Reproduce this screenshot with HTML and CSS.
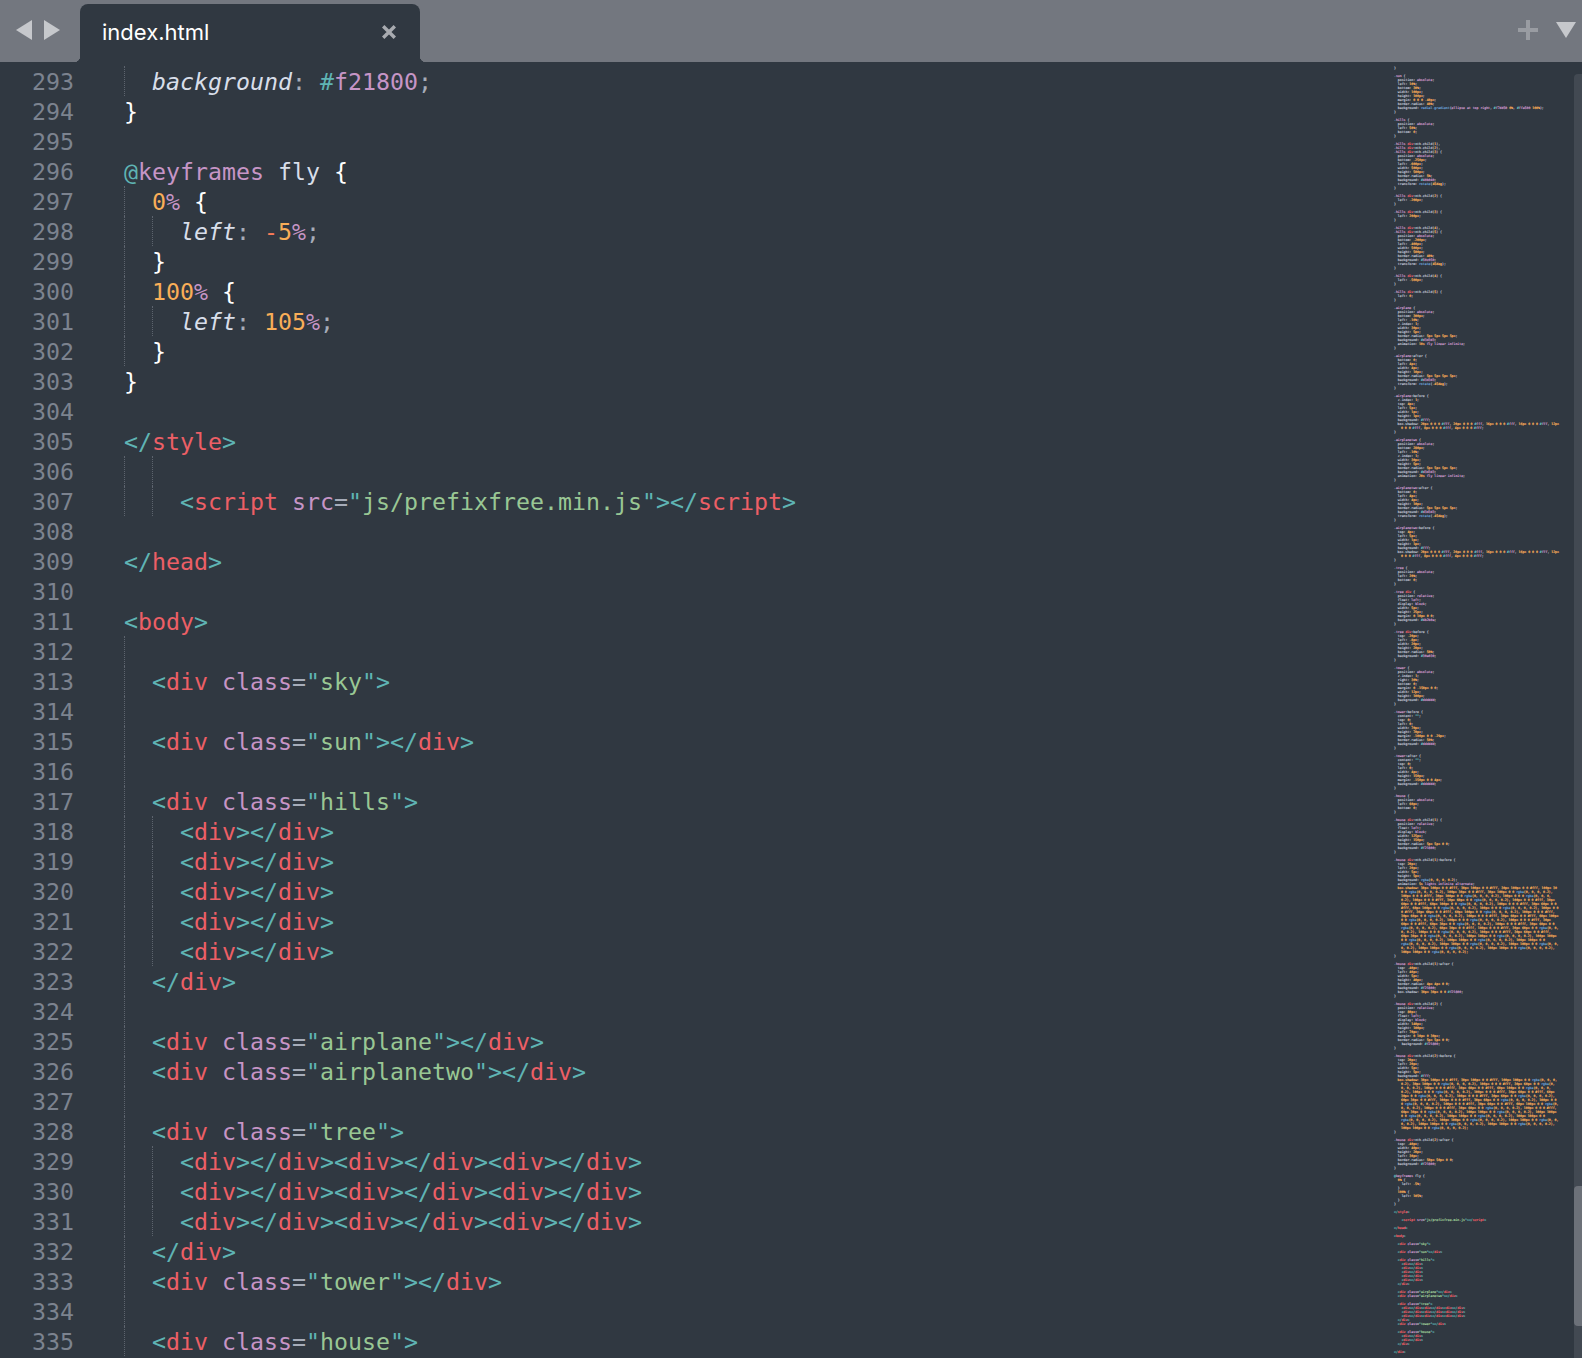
FILE: index.html
```html
<!DOCTYPE html>
<html lang="en">
<head>
  <meta charset="UTF-8" />
  <title>index.html</title>
  <link rel="stylesheet" href="styles.css">
</head>
<body>
  <div class="tabbar">
    <div class="nav">
      <svg width="16" height="20" viewBox="0 0 16 20"><path d="M16 0V20L0 10Z" /></svg>
      <svg width="16" height="20" viewBox="0 0 16 20"><path d="M0 0V20L16 10Z" /></svg>
    </div>
    <div class="tab">
      <span class="tab-name">index.html</span>
      <svg class="tab-close" width="14" height="14" viewBox="0 0 14 14"><path d="M1.2 1.2L12.8 12.8M12.8 1.2L1.2 12.8" /></svg>
    </div>
    <div class="tools">
      <svg class="plus" width="20" height="20" viewBox="0 0 20 20"><path d="M8 0H12V8H20V12H12V20H8V12H0V8H8Z" /></svg>
      <svg class="down" width="20" height="16" viewBox="0 0 20 16"><path d="M0 0H20L10 16Z" /></svg>
    </div>
  </div>

  <div class="editor">
    <div class="gutter">
      <div>293</div><div>294</div><div>295</div><div>296</div><div>297</div><div>298</div><div>299</div>
      <div>300</div><div>301</div><div>302</div><div>303</div><div>304</div><div>305</div><div>306</div>
      <div>307</div><div>308</div><div>309</div><div>310</div><div>311</div><div>312</div><div>313</div>
      <div>314</div><div>315</div><div>316</div><div>317</div><div>318</div><div>319</div><div>320</div>
      <div>321</div><div>322</div><div>323</div><div>324</div><div>325</div><div>326</div><div>327</div>
      <div>328</div><div>329</div><div>330</div><div>331</div><div>332</div><div>333</div><div>334</div>
      <div>335</div>
    </div>

    <div class="code">
      <div class="line"><span class="g"></span><span class="prop">background</span><span class="m">:</span> <span class="c">#</span><span class="a">f21800</span><span class="m">;</span></div>
      <div class="line"><span class="w">}</span></div>
      <div class="line"></div>
      <div class="line"><span class="c">@</span><span class="a">keyframes</span> <span class="n">fly</span> <span class="w">{</span></div>
      <div class="line"><span class="g"></span><span class="o">0</span><span class="a">%</span> <span class="w">{</span></div>
      <div class="line"><span class="g"></span><span class="g"></span><span class="prop">left</span><span class="m">:</span> <span class="minus">-</span><span class="o">5</span><span class="a">%</span><span class="m">;</span></div>
      <div class="line"><span class="g"></span><span class="w">}</span></div>
      <div class="line"><span class="g"></span><span class="o">100</span><span class="a">%</span> <span class="w">{</span></div>
      <div class="line"><span class="g"></span><span class="g"></span><span class="prop">left</span><span class="m">:</span> <span class="o">105</span><span class="a">%</span><span class="m">;</span></div>
      <div class="line"><span class="g"></span><span class="w">}</span></div>
      <div class="line"><span class="w">}</span></div>
      <div class="line"></div>
      <div class="line"><span class="c">&lt;/</span><span class="t">style</span><span class="c">&gt;</span></div>
      <div class="line"><span class="g"></span><span class="g"></span></div>
      <div class="line"><span class="g"></span><span class="g"></span><span class="c">&lt;</span><span class="t">script</span> <span class="a">src</span><span class="m">=</span><span class="c">"</span><span class="s">js/prefixfree.min.js</span><span class="c">"&gt;&lt;/</span><span class="t">script</span><span class="c">&gt;</span></div>
      <div class="line"></div>
      <div class="line"><span class="c">&lt;/</span><span class="t">head</span><span class="c">&gt;</span></div>
      <div class="line"></div>
      <div class="line"><span class="c">&lt;</span><span class="t">body</span><span class="c">&gt;</span></div>
      <div class="line"><span class="g"></span></div>
      <div class="line"><span class="g"></span><span class="c">&lt;</span><span class="t">div</span> <span class="a">class</span><span class="m">=</span><span class="c">"</span><span class="s">sky</span><span class="c">"&gt;</span></div>
      <div class="line"><span class="g"></span></div>
      <div class="line"><span class="g"></span><span class="c">&lt;</span><span class="t">div</span> <span class="a">class</span><span class="m">=</span><span class="c">"</span><span class="s">sun</span><span class="c">"&gt;&lt;/</span><span class="t">div</span><span class="c">&gt;</span></div>
      <div class="line"><span class="g"></span></div>
      <div class="line"><span class="g"></span><span class="c">&lt;</span><span class="t">div</span> <span class="a">class</span><span class="m">=</span><span class="c">"</span><span class="s">hills</span><span class="c">"&gt;</span></div>
      <div class="line"><span class="g"></span><span class="g"></span><span class="c">&lt;</span><span class="t">div</span><span class="c">&gt;&lt;/</span><span class="t">div</span><span class="c">&gt;</span></div>
      <div class="line"><span class="g"></span><span class="g"></span><span class="c">&lt;</span><span class="t">div</span><span class="c">&gt;&lt;/</span><span class="t">div</span><span class="c">&gt;</span></div>
      <div class="line"><span class="g"></span><span class="g"></span><span class="c">&lt;</span><span class="t">div</span><span class="c">&gt;&lt;/</span><span class="t">div</span><span class="c">&gt;</span></div>
      <div class="line"><span class="g"></span><span class="g"></span><span class="c">&lt;</span><span class="t">div</span><span class="c">&gt;&lt;/</span><span class="t">div</span><span class="c">&gt;</span></div>
      <div class="line"><span class="g"></span><span class="g"></span><span class="c">&lt;</span><span class="t">div</span><span class="c">&gt;&lt;/</span><span class="t">div</span><span class="c">&gt;</span></div>
      <div class="line"><span class="g"></span><span class="c">&lt;/</span><span class="t">div</span><span class="c">&gt;</span></div>
      <div class="line"><span class="g"></span></div>
      <div class="line"><span class="g"></span><span class="c">&lt;</span><span class="t">div</span> <span class="a">class</span><span class="m">=</span><span class="c">"</span><span class="s">airplane</span><span class="c">"&gt;&lt;/</span><span class="t">div</span><span class="c">&gt;</span></div>
      <div class="line"><span class="g"></span><span class="c">&lt;</span><span class="t">div</span> <span class="a">class</span><span class="m">=</span><span class="c">"</span><span class="s">airplanetwo</span><span class="c">"&gt;&lt;/</span><span class="t">div</span><span class="c">&gt;</span></div>
      <div class="line"><span class="g"></span></div>
      <div class="line"><span class="g"></span><span class="c">&lt;</span><span class="t">div</span> <span class="a">class</span><span class="m">=</span><span class="c">"</span><span class="s">tree</span><span class="c">"&gt;</span></div>
      <div class="line"><span class="g"></span><span class="g"></span><span class="c">&lt;</span><span class="t">div</span><span class="c">&gt;&lt;/</span><span class="t">div</span><span class="c">&gt;&lt;</span><span class="t">div</span><span class="c">&gt;&lt;/</span><span class="t">div</span><span class="c">&gt;&lt;</span><span class="t">div</span><span class="c">&gt;&lt;/</span><span class="t">div</span><span class="c">&gt;</span></div>
      <div class="line"><span class="g"></span><span class="g"></span><span class="c">&lt;</span><span class="t">div</span><span class="c">&gt;&lt;/</span><span class="t">div</span><span class="c">&gt;&lt;</span><span class="t">div</span><span class="c">&gt;&lt;/</span><span class="t">div</span><span class="c">&gt;&lt;</span><span class="t">div</span><span class="c">&gt;&lt;/</span><span class="t">div</span><span class="c">&gt;</span></div>
      <div class="line"><span class="g"></span><span class="g"></span><span class="c">&lt;</span><span class="t">div</span><span class="c">&gt;&lt;/</span><span class="t">div</span><span class="c">&gt;&lt;</span><span class="t">div</span><span class="c">&gt;&lt;/</span><span class="t">div</span><span class="c">&gt;&lt;</span><span class="t">div</span><span class="c">&gt;&lt;/</span><span class="t">div</span><span class="c">&gt;</span></div>
      <div class="line"><span class="g"></span><span class="c">&lt;/</span><span class="t">div</span><span class="c">&gt;</span></div>
      <div class="line"><span class="g"></span><span class="c">&lt;</span><span class="t">div</span> <span class="a">class</span><span class="m">=</span><span class="c">"</span><span class="s">tower</span><span class="c">"&gt;&lt;/</span><span class="t">div</span><span class="c">&gt;</span></div>
      <div class="line"><span class="g"></span></div>
      <div class="line"><span class="g"></span><span class="c">&lt;</span><span class="t">div</span> <span class="a">class</span><span class="m">=</span><span class="c">"</span><span class="s">house</span><span class="c">"&gt;</span></div>
    </div>

    <pre class="minimap">}

<s>.</s><i>sun</i> {
  position: <i>absolute</i>;
  left: <b>10%</b>;
  bottom: <b>30%</b>;
  width: <b>100px</b>;
  height: <b>100px</b>;
  margin: <b>0 0 0 -40px</b>;
  border-radius: <b>40%</b>;
  background: <u>radial-gradient</u>(<i>ellipse at top right</i>, <s>#</s><i>f7dd50</i> <b>0%</b>, <s>#</s><i>ffa500</i> <b>100%</b>);
}

<s>.</s><i>hills</i> {
  position: <i>absolute</i>;
  left: <b>50%</b>;
  bottom: <b>0</b>;
}

<s>.</s><i>hills</i> <em>div</em>:nth-child(<b>1</b>),
<s>.</s><i>hills</i> <em>div</em>:nth-child(<b>2</b>),
<s>.</s><i>hills</i> <em>div</em>:nth-child(<b>3</b>) {
  position: <i>absolute</i>;
  bottom: <b>-250px</b>;
  left: <b>-600px</b>;
  width: <b>500px</b>;
  height: <b>500px</b>;
  border-radius: <b>5%</b>;
  background: <s>#</s><i>40b040</i>;
  transform: <u>rotate</u>(<b>45deg</b>);
}

<s>.</s><i>hills</i> <em>div</em>:nth-child(<b>2</b>) {
  left: <b>-200px</b>;
}

<s>.</s><i>hills</i> <em>div</em>:nth-child(<b>3</b>) {
  left: <b>200px</b>;
}

<s>.</s><i>hills</i> <em>div</em>:nth-child(<b>4</b>),
<s>.</s><i>hills</i> <em>div</em>:nth-child(<b>5</b>) {
  position: <i>absolute</i>;
  bottom: <b>-200px</b>;
  left: <b>-400px</b>;
  width: <b>500px</b>;
  height: <b>500px</b>;
  border-radius: <b>40%</b>;
  background: <s>#</s><i>50c050</i>;
  transform: <u>rotate</u>(<b>45deg</b>);
}

<s>.</s><i>hills</i> <em>div</em>:nth-child(<b>4</b>) {
  left: <b>-500px</b>;
}

<s>.</s><i>hills</i> <em>div</em>:nth-child(<b>5</b>) {
  left: <b>0</b>;
}

<s>.</s><i>airplane</i> {
  position: <i>absolute</i>;
  bottom: <b>300px</b>;
  left: <b>-10%</b>;
  z-index: <b>1</b>;
  width: <b>30px</b>;
  height: <b>5px</b>;
  border-radius: <b>5px 5px 5px 5px</b>;
  background: <s>#</s><i>d3d3d3</i>;
  animation: <b>10s</b> <i>fly linear infinite</i>;
}

<s>.</s><i>airplane</i>:after {
  bottom: <b>0</b>;
  left: <b>4px</b>;
  width: <b>4px</b>;
  height: <b>10px</b>;
  border-radius: <b>5px 5px 5px 5px</b>;
  background: <s>#</s><i>d3d3d3</i>;
  transform: <u>rotate</u>(<b>-45deg</b>);
}

<s>.</s><i>airplane</i>:before {
  z-index: <b>1</b>;
  top: <b>4px</b>;
  left: <b>5px</b>;
  width: <b>1px</b>;
  height: <b>1px</b>;
  background: <s>#</s><i>fff</i>;
<span class="wrap">box-shadow: <b>20px 0 0 0</b> <s>#</s><i>fff</i>, <b>20px 0 0 0</b> <s>#</s><i>fff</i>, <b>16px 0 0 0</b> <s>#</s><i>fff</i>, <b>16px 0 0 0</b> <s>#</s><i>fff</i>, <b>12px 0 0 0</b> <s>#</s><i>fff</i>, <b>8px 0 0 0</b> <s>#</s><i>fff</i>, <b>4px 0 0 0</b> <s>#</s><i>fff</i>;</span>}

<s>.</s><i>airplanetwo</i> {
  position: <i>absolute</i>;
  bottom: <b>280px</b>;
  left: <b>-10%</b>;
  z-index: <b>1</b>;
  width: <b>30px</b>;
  height: <b>5px</b>;
  border-radius: <b>5px 5px 5px 5px</b>;
  background: <s>#</s><i>d3d3d3</i>;
  animation: <b>20s</b> <i>fly linear infinite</i>;
}

<s>.</s><i>airplanetwo</i>:after {
  bottom: <b>0</b>;
  left: <b>4px</b>;
  width: <b>4px</b>;
  height: <b>10px</b>;
  border-radius: <b>5px 5px 5px 5px</b>;
  background: <s>#</s><i>d3d3d3</i>;
  transform: <u>rotate</u>(<b>-45deg</b>);
}

<s>.</s><i>airplanetwo</i>:before {
  top: <b>4px</b>;
  left: <b>5px</b>;
  width: <b>1px</b>;
  height: <b>1px</b>;
  background: <s>#</s><i>fff</i>;
<span class="wrap">box-shadow: <b>20px 0 0 0</b> <s>#</s><i>fff</i>, <b>20px 0 0 0</b> <s>#</s><i>fff</i>, <b>16px 0 0 0</b> <s>#</s><i>fff</i>, <b>16px 0 0 0</b> <s>#</s><i>fff</i>, <b>12px 0 0 0</b> <s>#</s><i>fff</i>, <b>8px 0 0 0</b> <s>#</s><i>fff</i>, <b>4px 0 0 0</b> <s>#</s><i>fff</i>;</span>}

<s>.</s><i>tree</i> {
  position: <i>absolute</i>;
  left: <b>20%</b>;
  bottom: <b>0</b>;
}

<s>.</s><i>tree</i> <em>div</em> {
  position: <i>relative</i>;
  float: <i>left</i>;
  display: <i>block</i>;
  width: <b>5px</b>;
  height: <b>25px</b>;
  margin: <b>0 10px 0 0</b>;
  background: <s>#</s><i>4b2b0a</i>;
}

<s>.</s><i>tree</i> <em>div</em>:before {
  top: <b>-20px</b>;
  left: <b>-8px</b>;
  width: <b>20px</b>;
  height: <b>20px</b>;
  border-radius: <b>50%</b>;
  background: <s>#</s><i>30a030</i>;
}

<s>.</s><i>tower</i> {
  position: <i>absolute</i>;
  z-index: <b>1</b>;
  right: <b>30%</b>;
  bottom: <b>0</b>;
  margin: <b>0 -150px 0 0</b>;
  width: <b>12px</b>;
  height: <b>100px</b>;
  background: <s>#</s><i>dddddd</i>;
}

<s>.</s><i>tower</i>:before {
  content: <s>""</s>;
  top: <b>0</b>;
  left: <b>0</b>;
  width: <b>70px</b>;
  height: <b>70px</b>;
  margin: <b>-100px 0 0 -29px</b>;
  border-radius: <b>50%</b>;
  background: <s>#</s><i>dddddd</i>;
}

<s>.</s><i>tower</i>:after {
  content: <s>""</s>;
  top: <b>0</b>;
  left: <b>0</b>;
  width: <b>4px</b>;
  height: <b>150px</b>;
  margin: <b>-150px 0 0 4px</b>;
  background: <s>#</s><i>dddddd</i>;
}

<s>.</s><i>house</i> {
  position: <i>absolute</i>;
  left: <b>60px</b>;
  bottom: <b>0</b>;
}

<s>.</s><i>house</i> <em>div</em>:nth-child(<b>1</b>) {
  position: <i>relative</i>;
  float: <i>left</i>;
  display: <i>block</i>;
  width: <b>125px</b>;
  height: <b>150px</b>;
  border-radius: <b>5px 5px 0 0</b>;
  background: <s>#</s><i>f21800</i>;
}

<s>.</s><i>house</i> <em>div</em>:nth-child(<b>1</b>):before {
  top: <b>20px</b>;
  left: <b>20px</b>;
  width: <b>5px</b>;
  height: <b>5px</b>;
  background: <u>rgba</u>(<b>0, 0, 0, 0.2</b>);
  animation: <b>5s</b> <i>lights infinite alternate</i>;
<span class="wrap shadow">box-shadow: 30px 100px 0 0 #fff, 30px 100px 0 0 #fff, 30px 100px 0 0 #fff, 100px 30 0 0 <u>rgba</u>(0, 0, 0, 0.2), 100px 30px 0 0 #fff, 30px 100px 0 0 <u>rgba</u>(0, 0, 0, 0.2), 100px 0 0 0 #fff, 30px 100px 0 0 <u>rgba</u>(0, 0, 0, 0.2), 100px 0 0 0 <u>rgba</u>(0, 0, 0, 0.2), 100px 0 0 0 #fff, 30px 60px 0 0 <u>rgba</u>(0, 0, 0, 0.2), 100px 0 0 0 #fff, 30px 60px 0 0 #fff, 60px 100px 0 0 <u>rgba</u>(0, 0, 0, 0.2), 100px 0 0 0 #fff, 30px 60px 0 0 #fff, 60px 100px 0 0 <u>rgba</u>(0, 0, 0, 0.2), 100px 0 0 0 <u>rgba</u>(0, 0, 0, 0.2), 100px 0 0 0 #fff, 30px 60px 0 0 #fff, 60px 100px 0 0 <u>rgba</u>(0, 0, 0, 0.2), 100px 0 0 0 #fff, 30px 60px 0 0 <u>rgba</u>(0, 0, 0, 0.2), 100px 0 0 0 #fff, 30px 60px 0 0 #fff, 60px 100px 0 0 <u>rgba</u>(0, 0, 0, 0.2), 100px 0 0 0 <u>rgba</u>(0, 0, 0, 0.2), 100px 0 0 0 #fff, 30px 60px 0 0 #fff, 60px 30px 0 0 <u>rgba</u>(0, 0, 0, 0.2), 100px 0 0 0 #fff, 30px 60px 0 0 <u>rgba</u>(0, 0, 0, 0.2), 60px 30px 0 0 #fff, 100px 0 0 0 #fff, 30px 60px 0 0 <u>rgba</u>(0, 0, 0, 0.2), 100px 0 0 0 <u>rgba</u>(0, 0, 0, 0.2), 100px 0 0 0 #fff, 30px 60px 0 0 #fff, 60px 30px 0 0 <u>rgba</u>(0, 0, 0, 0.2), 100px 100px 0 0 <u>rgba</u>(0, 0, 0, 0.2), 100px 100px 0 0 <u>rgba</u>(0, 0, 0, 0.2), 100px 100px 0 0 <u>rgba</u>(0, 0, 0, 0.2), 100px 100px 0 0 <u>rgba</u>(0, 0, 0, 0.2), 100px 100px 0 0 <u>rgba</u>(0, 0, 0, 0.2), 100px 100px 0 0 <u>rgba</u>(0, 0, 0, 0.2), 100px 100px 0 0 <u>rgba</u>(0, 0, 0, 0.2), 100px 100px 0 0 <u>rgba</u>(0, 0, 0, 0.2), 100px 100px 0 0 <u>rgba</u>(0, 0, 0, 0.2);</span>}

<s>.</s><i>house</i> <em>div</em>:nth-child(<b>1</b>):after {
  top: <b>-40px</b>;
  left: <b>40px</b>;
  width: <b>5px</b>;
  height: <b>40px</b>;
  border-radius: <b>4px 4px 0 0</b>;
  background: <s>#</s><i>f21800</i>;
  box-shadow: <b>30px 30px 0 0</b> <s>#</s><i>f21800</i>;
}

<s>.</s><i>house</i> <em>div</em>:nth-child(<b>2</b>) {
  position: <i>relative</i>;
  top: <b>80px</b>;
  float: <i>left</i>;
  display: <i>block</i>;
  width: <b>140px</b>;
  height: <b>100px</b>;
  left: <b>70px</b>;
  margin: <b>0 10px 0 30px</b>;
  border-radius: <b>5px 5px 0 0</b>;
    background: <s>#</s><i>f21800</i>;
}

<s>.</s><i>house</i> <em>div</em>:nth-child(<b>2</b>):before {
  top: <b>20px</b>;
  left: <b>20px</b>;
  width: <b>5px</b>;
  height: <b>5px</b>;
  background: <s>#</s><i>fff</i>;
<span class="wrap shadow">box-shadow: 30px 100px 0 0 #fff, 30px 100px 0 0 #fff, 100px 100px 0 0 <u>rgba</u>(0, 0, 0, 0.2), 30px 100px 0 0 <u>rgba</u>(0, 0, 0, 0.2), 100px 0 0 0 #fff, 30px 60px 0 0 <u>rgba</u>(0, 0, 0, 0.2), 100px 0 0 0 #fff, 30px 60px 0 0 #fff, 60px 100px 0 0 <u>rgba</u>(0, 0, 0, 0.2), 100px 0 0 0 <u>rgba</u>(0, 0, 0, 0.2), 100px 0 0 0 #fff, 30px 60px 0 0 #fff, 60px 30px 0 0 <u>rgba</u>(0, 0, 0, 0.2), 100px 0 0 0 #fff, 30px 60px 0 0 <u>rgba</u>(0, 0, 0, 0.2), 60px 30px 0 0 #fff, 100px 0 0 0 #fff, 30px 60px 0 0 <u>rgba</u>(0, 0, 0, 0.2), 100px 0 0 0 <u>rgba</u>(0, 0, 0, 0.2), 100px 0 0 0 #fff, 30px 60px 0 0 #fff, 60px 100px 0 0 <u>rgba</u>(0, 0, 0, 0.2), 100px 0 0 0 #fff, 30px 60px 0 0 <u>rgba</u>(0, 0, 0, 0.2), 100px 0 0 0 #fff, 60px 30px 0 0 <u>rgba</u>(0, 0, 0, 0.2), 100px 100px 0 0 <u>rgba</u>(0, 0, 0, 0.2), 100px 100px 0 0 <u>rgba</u>(0, 0, 0, 0.2), 100px 100px 0 0 <u>rgba</u>(0, 0, 0, 0.2), 100px 100px 0 0 <u>rgba</u>(0, 0, 0, 0.2), 100px 100px 0 0 <u>rgba</u>(0, 0, 0, 0.2), 100px 100px 0 0 <u>rgba</u>(0, 0, 0, 0.2), 100px 100px 0 0 <u>rgba</u>(0, 0, 0, 0.2), 100px 100px 0 0 <u>rgba</u>(0, 0, 0, 0.2), 100px 100px 0 0 <u>rgba</u>(0, 0, 0, 0.2);</span>}

<s>.</s><i>house</i> <em>div</em>:nth-child(<b>2</b>):after {
  top: <b>-40px</b>;
  width: <b>40px</b>;
  height: <b>20px</b>;
  left: <b>30px</b>;
  border-radius: <b>50px 50px 0 0</b>;
  background: <s>#</s><i>f21800</i>;
}

<s>@</s><i>keyframes</i> fly {
  <b>0%</b> {
    left: <b>-5%</b>;
  }
  <b>100%</b> {
    left: <b>105%</b>;
  }
}

<s>&lt;/</s><em>style</em><s>&gt;</s>

    <s>&lt;</s><em>script</em> <i>src</i>=<s>"</s><q>js/prefixfree.min.js</q><s>"&gt;&lt;/</s><em>script</em><s>&gt;</s>

<s>&lt;/</s><em>head</em><s>&gt;</s>

<s>&lt;</s><em>body</em><s>&gt;</s>

  <s>&lt;</s><em>div</em> <i>class</i>=<s>"</s><q>sky</q><s>"&gt;</s>

  <s>&lt;</s><em>div</em> <i>class</i>=<s>"</s><q>sun</q><s>"&gt;&lt;/</s><em>div</em><s>&gt;</s>

  <s>&lt;</s><em>div</em> <i>class</i>=<s>"</s><q>hills</q><s>"&gt;</s>
    <s>&lt;</s><em>div</em><s>&gt;&lt;/</s><em>div</em><s>&gt;</s>
    <s>&lt;</s><em>div</em><s>&gt;&lt;/</s><em>div</em><s>&gt;</s>
    <s>&lt;</s><em>div</em><s>&gt;&lt;/</s><em>div</em><s>&gt;</s>
    <s>&lt;</s><em>div</em><s>&gt;&lt;/</s><em>div</em><s>&gt;</s>
    <s>&lt;</s><em>div</em><s>&gt;&lt;/</s><em>div</em><s>&gt;</s>
  <s>&lt;/</s><em>div</em><s>&gt;</s>

  <s>&lt;</s><em>div</em> <i>class</i>=<s>"</s><q>airplane</q><s>"&gt;&lt;/</s><em>div</em><s>&gt;</s>
  <s>&lt;</s><em>div</em> <i>class</i>=<s>"</s><q>airplanetwo</q><s>"&gt;&lt;/</s><em>div</em><s>&gt;</s>

  <s>&lt;</s><em>div</em> <i>class</i>=<s>"</s><q>tree</q><s>"&gt;</s>
    <s>&lt;</s><em>div</em><s>&gt;&lt;/</s><em>div</em><s>&gt;&lt;</s><em>div</em><s>&gt;&lt;/</s><em>div</em><s>&gt;&lt;</s><em>div</em><s>&gt;&lt;/</s><em>div</em><s>&gt;</s>
    <s>&lt;</s><em>div</em><s>&gt;&lt;/</s><em>div</em><s>&gt;&lt;</s><em>div</em><s>&gt;&lt;/</s><em>div</em><s>&gt;&lt;</s><em>div</em><s>&gt;&lt;/</s><em>div</em><s>&gt;</s>
    <s>&lt;</s><em>div</em><s>&gt;&lt;/</s><em>div</em><s>&gt;&lt;</s><em>div</em><s>&gt;&lt;/</s><em>div</em><s>&gt;&lt;</s><em>div</em><s>&gt;&lt;/</s><em>div</em><s>&gt;</s>
  <s>&lt;/</s><em>div</em><s>&gt;</s>
  <s>&lt;</s><em>div</em> <i>class</i>=<s>"</s><q>tower</q><s>"&gt;&lt;/</s><em>div</em><s>&gt;</s>

  <s>&lt;</s><em>div</em> <i>class</i>=<s>"</s><q>house</q><s>"&gt;</s>
    <s>&lt;</s><em>div</em><s>&gt;&lt;/</s><em>div</em><s>&gt;</s>
    <s>&lt;</s><em>div</em><s>&gt;&lt;/</s><em>div</em><s>&gt;</s>
  <s>&lt;/</s><em>div</em><s>&gt;</s>

<s>&lt;/</s><em>div</em><s>&gt;</s></pre>

    <div class="scrollbar">
      <div class="thumb"></div>
    </div>
  </div>
</body>
</html>
```

FILE: styles.css
```css
html, body {
  height: 100%;
}
body {
  margin: 0;
  overflow: hidden;
  display: flex;
  flex-direction: column;
  background: #303841;
  font-family: "DejaVu Sans Mono", monospace;
}

/* tab bar */
.tabbar {
  display: flex;
  flex: none;
  height: 62px;
  background: #73777f;
}
.nav {
  display: flex;
  width: 80px;
  gap: 12px;
  padding: 20px 0 0 16px;
  box-sizing: border-box;
}
.nav svg, .down {
  fill: #c6c8cc;
}
.tab {
  position: relative;
  display: flex;
  align-items: center;
  justify-content: space-between;
  width: 340px;
  margin-top: 4px;
  padding: 0 24px 2px 22px;
  box-sizing: border-box;
  background: #303841;
  border-radius: 8px 8px 0 0;
  font-family: Inter, sans-serif;
  font-size: 22px;
  color: #fff;
}
.tab::before, .tab::after {
  content: "";
  position: absolute;
  bottom: 0;
  width: 6px;
  height: 6px;
}
.tab::before {
  left: -6px;
  background: radial-gradient(circle at 0 0, transparent 6px, #303841 6.5px);
}
.tab::after {
  right: -6px;
  background: radial-gradient(circle at 100% 0, transparent 6px, #303841 6.5px);
}
.tab-close {
  fill: none;
  stroke: #a8abb0;
  stroke-width: 3.4;
}
.tools {
  display: flex;
  flex: 1;
  justify-content: flex-end;
  gap: 18px;
  padding: 20px 6px 0 0;
}
.plus {
  fill: #999ca2;
}
.down {
  margin-top: 2px;
}

/* editor */
.editor {
  display: flex;
  flex: 1;
  min-height: 0;
  overflow: hidden;
}
.gutter {
  flex: none;
  width: 74px;
  padding-top: 5px;
  text-align: right;
  font-size: 23.25px;
  line-height: 30px;
  color: #7c838f;
}
.code {
  flex: none;
  width: 1306px;
  padding: 5px 0 0 50px;
  box-sizing: border-box;
  font-size: 23.25px;
  line-height: 30px;
}
.line {
  height: 30px;
  white-space: pre;
}
.g {
  display: inline-block;
  width: 28px;
  height: 30px;
  margin-top: -1px;
  vertical-align: top;
  box-sizing: border-box;
  border-left: 1px dotted #5d646e;
}
.prop {
  font-style: italic;
  color: #d8dee9;
}
.w { color: #fff; }
.n { color: #d8dee9; }
.m { color: #a6acb9; }
.c { color: #5fb4b4; }
.a { color: #c695c6; }
.o { color: #f9ae58; }
.t { color: #ec5f66; }
.s { color: #99c794; }
.minus { color: #f97b58; }

/* minimap */
.minimap {
  flex: none;
  width: 194px;
  height: 1296px;
  margin: 0;
  padding: 4px 0 0 14px;
  box-sizing: border-box;
  font-family: "DejaVu Sans Mono", monospace;
  font-size: 3.2px;
  line-height: 4px;
  color: #b4bac5;
  -webkit-text-stroke: 0.2px;
  overflow: hidden;
}
.minimap i, .minimap em {
  font-style: normal;
  font-weight: normal;
}
.minimap i { color: #c695c6; }
.minimap em { color: #ec5f66; }
.minimap b {
  font-weight: normal;
  color: #f9ae58;
}
.minimap u {
  text-decoration: none;
  color: #6699cc;
}
.minimap s {
  text-decoration: none;
  color: #5fb4b4;
}
.minimap q {
  quotes: none;
  color: #99c794;
}
.wrap {
  display: block;
  width: 166px;
  padding-left: 7px;
  box-sizing: border-box;
  text-indent: -3.4px;
  white-space: normal;
}
.shadow {
  color: #f9ae58;
}

/* scrollbar */
.scrollbar {
  flex: none;
  width: 8px;
  margin-top: 12px;
  padding-top: 1112px;
  box-sizing: border-box;
  background: #424952;
  border-radius: 4px 0 0 0;
}
.thumb {
  height: 140px;
  background: #6c7179;
  border-radius: 4px 0 0 4px;
}
```
